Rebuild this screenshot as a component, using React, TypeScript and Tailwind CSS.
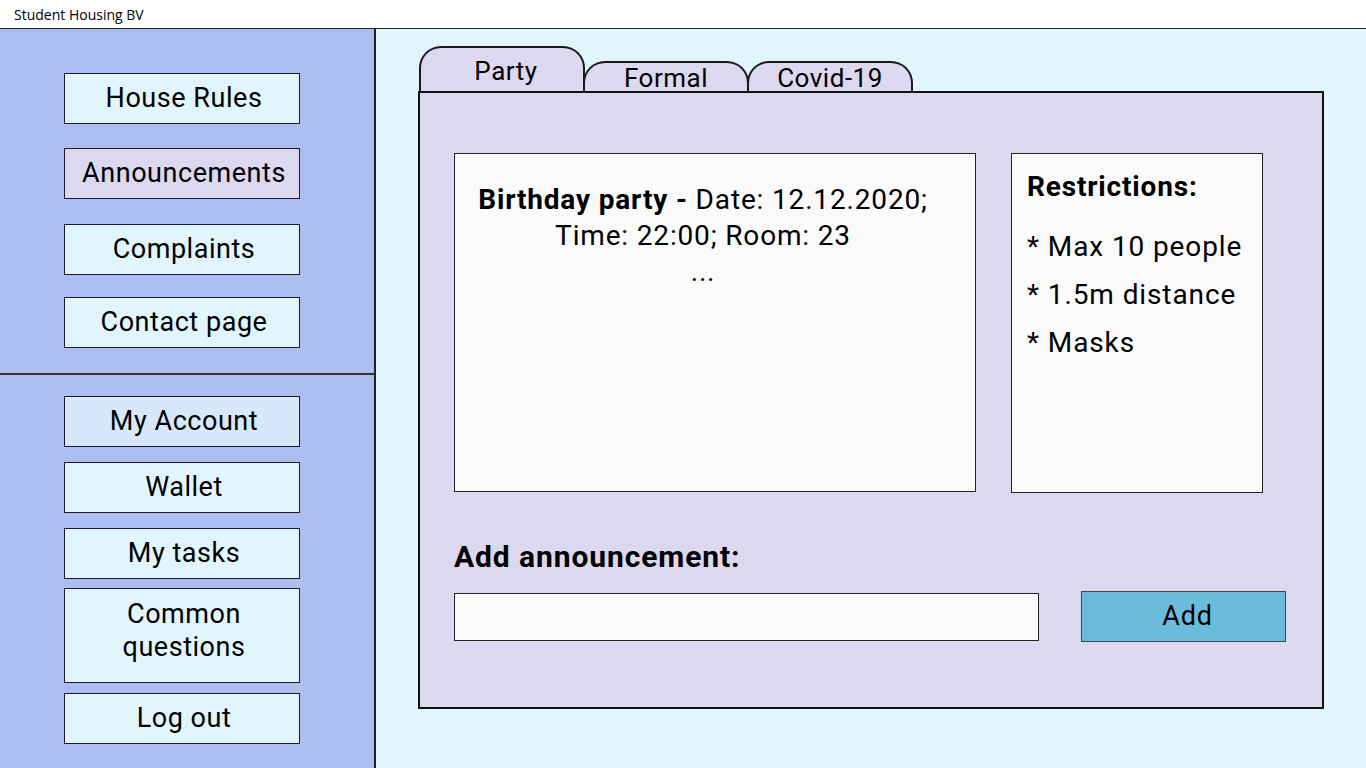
import React from "react";

const navTop = [
  { label: "House Rules", bg: "bg-[#e1f5fc]", mt: "mt-[44px]" },
  { label: "Announcements", bg: "bg-[#dcd8ef]", mt: "mt-[24px]" },
  { label: "Complaints", bg: "bg-[#e1f5fc]", mt: "mt-[25px]" },
  { label: "Contact page", bg: "bg-[#e1f5fc]", mt: "mt-[22px]" },
];

function NavButton({ label, bg, mt, tall }: { label: string; bg: string; mt: string; tall?: boolean }) {
  return (
    <div
      className={`${mt} ${bg} ${tall ? "h-[95px] pb-[10px]" : "h-[51px]"} ml-[64px] flex w-[236px] items-center justify-center border border-[#1a1a2a] pl-[4px] text-center text-[27px] leading-[33px] tracking-[0.02em] text-black`}
    >
      {label}
    </div>
  );
}

function Tab({ label, active }: { label: string; active?: boolean }) {
  return (
    <div
      className={`${active ? "h-[45px] pt-[10px] items-start pl-[8px]" : "h-[30px] items-center pt-[2px]"} -ml-[2px] flex w-[166px] justify-center rounded-t-[22px] border-2 border-b-0 border-[#1a1a1a] bg-[#dcd8ef] text-[26px] leading-none tracking-[0.02em] text-black first:ml-0`}
    >
      {label}
    </div>
  );
}

export default function App() {
  return (
    <div className="flex h-[768px] w-[1366px] flex-col overflow-hidden bg-white font-['Roboto',sans-serif]">
      <div className="flex h-[29px] items-center border-b border-[#222] pl-[14px] font-['Open_Sans',sans-serif] text-[14px] text-black">
        Student Housing BV
      </div>
      <div className="flex flex-1">
        <aside className="flex w-[376px] flex-col border-r-2 border-[#222] bg-[#adbdf0]">
          <div className="flex h-[346px] flex-col border-b-2 border-[#333]">
            {navTop.map((n) => (
              <NavButton key={n.label} {...n} />
            ))}
          </div>
          <div className="flex flex-col">
            <NavButton label="My Account" bg="bg-[#d7e8fb]" mt="mt-[21px]" />
            <NavButton label="Wallet" bg="bg-[#e1f5fc]" mt="mt-[15px]" />
            <NavButton label="My tasks" bg="bg-[#e1f5fc]" mt="mt-[15px]" />
            <NavButton label={"Common\nquestions"} bg="bg-[#e1f5fc] whitespace-pre-line" mt="mt-[9px]" tall />
            <NavButton label="Log out" bg="bg-[#e1f5fc]" mt="mt-[10px]" />
          </div>
        </aside>
        <main className="flex-1 bg-[#e1f5fc] pl-[42px] pt-[17px]">
          <div className="flex items-end pl-[1px]">
            <Tab label="Party" active />
            <Tab label="Formal" />
            <Tab label="Covid-19" />
          </div>
          <div className="flex h-[618px] w-[906px] flex-col border-2 border-[#111] bg-[#dcd8ef] px-[34px] pt-[60px]">
            <div className="flex gap-[35px]">
              <div className="h-[339px] w-[522px] border border-[#222] bg-[#fafafa] pr-[24px] pt-[28px] text-center text-[28px] leading-[36px] tracking-[0.03em] text-black">
                <div>
                  <span className="font-bold">Birthday party -</span> Date: 12.12.2020;
                </div>
                <div>Time: 22:00; Room: 23</div>
                <div className="leading-[36px]">...</div>
              </div>
              <div className="h-[340px] w-[252px] border border-[#222] bg-[#fafafa] pl-[15px] pt-[15px] text-[28px] tracking-[0.032em] text-black">
                <div className="font-bold leading-[36px] tracking-[0.03em]">Restrictions:</div>
                <div className="mt-[18px] leading-[48px]">* Max 10 people</div>
                <div className="leading-[48px]">* 1.5m distance</div>
                <div className="leading-[48px]">* Masks</div>
              </div>
            </div>
            <div className="mt-[46px] text-[30px] font-bold leading-[36px] tracking-[0.03em] text-black">
              Add announcement:
            </div>
            <div className="mt-[16px] flex items-center">
              <div className="h-[48px] w-[585px] border border-[#222] bg-[#fafafa]" />
              <div className="ml-[42px] flex h-[51px] w-[205px] items-center justify-center border border-[#444] bg-[#6abbdc] pl-[8px] text-[27px] tracking-[0.03em] text-black">
                Add
              </div>
            </div>
          </div>
        </main>
      </div>
    </div>
  );
}
